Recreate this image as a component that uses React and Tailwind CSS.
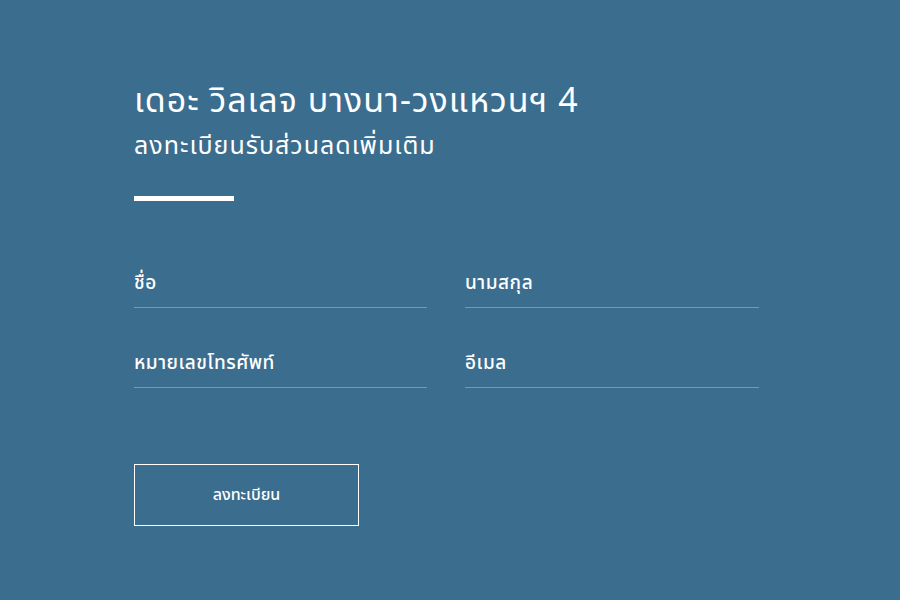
const Field = ({ label }) => (
  <div className="flex flex-col">
    <label className="text-[19px] leading-[28px] font-medium tracking-[0.5px] text-white">{label}</label>
    <div className="mt-[9px] h-px bg-white/30" />
  </div>
);

export default function App() {
  return (
    <div
      className="w-[900px] h-[600px] bg-[#3b6d8f] pl-[134px] pt-[80px]"
      style={{ fontFamily: '"Noto Sans Thai", "Noto Sans", "DejaVu Sans", sans-serif' }}
    >
      <h1 className="text-[34px] leading-[44px] tracking-[1px] text-white">
        เดอะ วิลเลจ บางนา-วงแหวนฯ 4
      </h1>
      <h2 className="mt-[7px] text-[25px] leading-[30px] tracking-[1px] text-white">
        ลงทะเบียนรับส่วนลดเพิ่มเติม
      </h2>
      <div className="mt-[35px] w-[100px] h-[5px] bg-white" />

      <form className="mt-[69px] grid grid-cols-[293px_294px] gap-x-[38px] gap-y-[42px]">
        <Field label="ชื่อ" />
        <Field label="นามสกุล" />
        <Field label="หมายเลขโทรศัพท์" />
        <Field label="อีเมล" />
      </form>

      <button
        type="button"
        className="mt-[76px] w-[225px] h-[62px] border border-white text-white text-[16px] font-medium"
      >
        ลงทะเบียน
      </button>
    </div>
  );
}
